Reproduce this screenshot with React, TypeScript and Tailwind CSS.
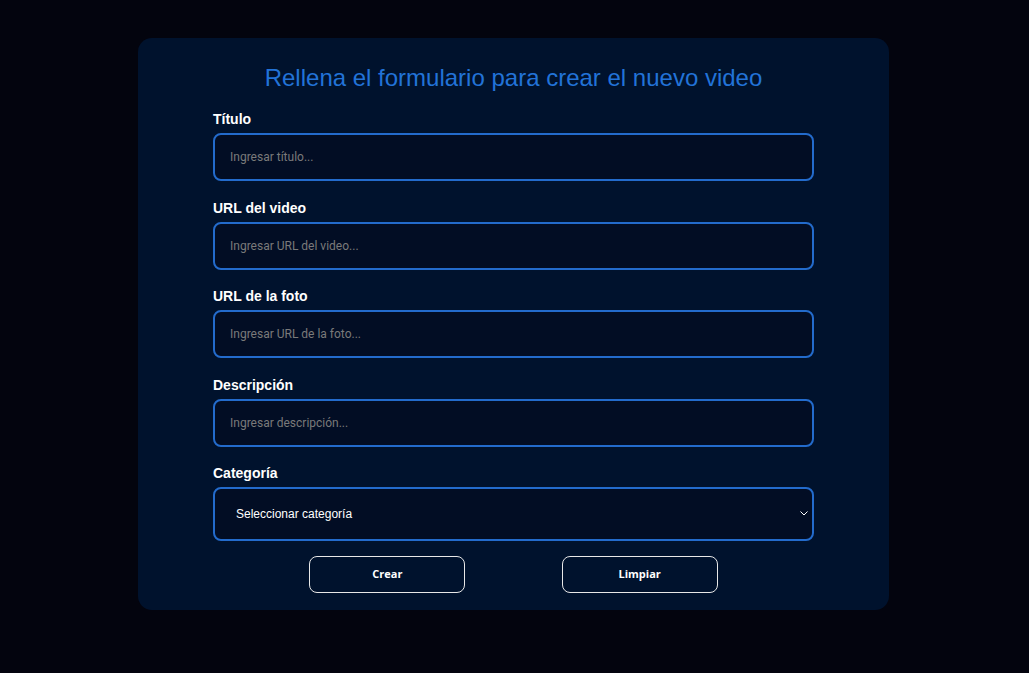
import { useState } from "react";

const FIELDS = [
  { id: "titulo", label: "Título", placeholder: "Ingresar título..." },
  { id: "video", label: "URL del video", placeholder: "Ingresar URL del video..." },
  { id: "foto", label: "URL de la foto", placeholder: "Ingresar URL de la foto..." },
  { id: "descripcion", label: "Descripción", placeholder: "Ingresar descripción..." },
];

export default function App() {
  const [values, setValues] = useState<Record<string, string>>({});
  const [categoria, setCategoria] = useState("");

  return (
    <div className="min-h-[673px] bg-[#03040e] pt-[38px] font-['Liberation_Sans',Arial,sans-serif]">
      <div className="mx-auto w-[751px] -translate-x-[1px] rounded-[14px] bg-[#00122d] px-[75px] pt-[24px] pb-[17px]">
        <h1 className="text-center text-[24px] leading-[32px] text-[#2273d8]">
          Rellena el formulario para crear el nuevo video
        </h1>

        <form className="mt-[17px]" onSubmit={(e) => e.preventDefault()}>
          {FIELDS.map((f) => (
            <div key={f.id} className="mb-[18.5px]">
              <label
                htmlFor={f.id}
                className="block text-[14px] leading-[16px] font-bold text-white"
              >
                {f.label}
              </label>
              <input
                id={f.id}
                value={values[f.id] ?? ""}
                onChange={(e) => setValues({ ...values, [f.id]: e.target.value })}
                placeholder={f.placeholder}
                className="mt-[6px] block h-[48px] w-full rounded-[8px] border-2 border-[#236bcc] bg-[#020d24] px-[15px] font-['Roboto',sans-serif] text-[12px] text-white outline-none placeholder:text-[#7a7a7a]"
              />
            </div>
          ))}

          <div>
            <label
              htmlFor="categoria"
              className="block text-[14px] leading-[16px] font-bold text-white"
            >
              Categoría
            </label>
            <div className="relative mt-[6px]">
              <select
                id="categoria"
                value={categoria}
                onChange={(e) => setCategoria(e.target.value)}
                className="block h-[54px] w-full appearance-none rounded-[8px] border-2 border-[#236bcc] bg-[#020d24] px-[21px] text-[12px] text-white outline-none"
              >
                <option value="">Seleccionar categoría</option>
                <option value="front">Front End</option>
                <option value="back">Back End</option>
                <option value="innovacion">Innovación y Gestión</option>
              </select>
              <svg
                className="pointer-events-none absolute top-[24px] right-[6px]"
                width="8"
                height="5"
                viewBox="0 0 8 5"
                fill="none"
              >
                <path d="M0.5 0.5 L4 4 L7.5 0.5" stroke="white" strokeWidth="1" />
              </svg>
            </div>
          </div>

          <div className="mt-[15px] flex justify-evenly">
            <button
              type="submit"
              className="h-[37px] w-[156px] rounded-[8px] border-[1.5px] border-[#e8e8e8] font-['Open_Sans',sans-serif] text-[11px] font-bold text-white"
            >
              Crear
            </button>
            <button
              type="button"
              onClick={() => {
                setValues({});
                setCategoria("");
              }}
              className="h-[37px] w-[156px] rounded-[8px] border-[1.5px] border-[#e8e8e8] font-['Open_Sans',sans-serif] text-[11px] font-bold text-white"
            >
              Limpiar
            </button>
          </div>
        </form>
      </div>
    </div>
  );
}
